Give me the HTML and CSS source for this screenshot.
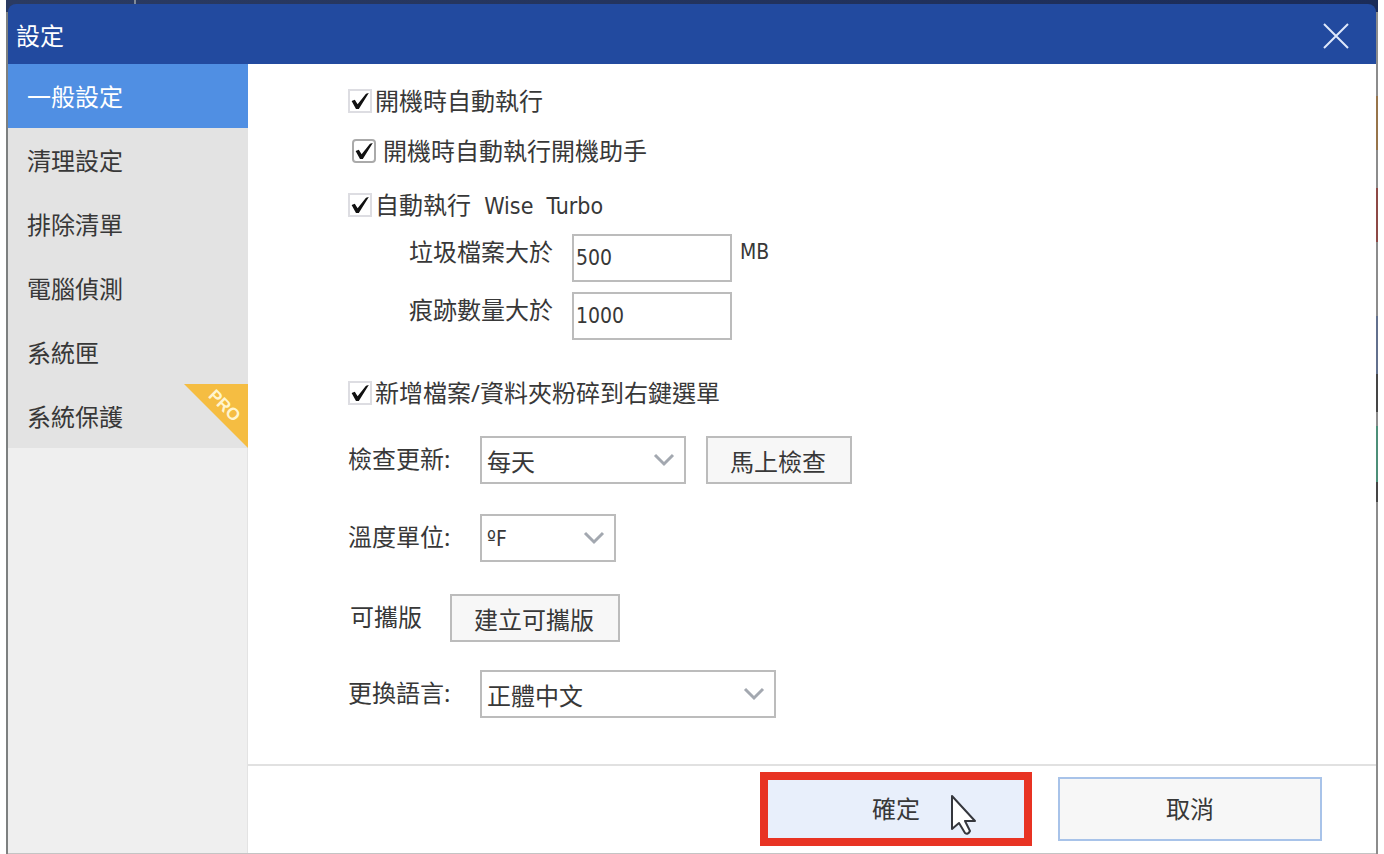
FILE: index.html
```html
<!DOCTYPE html>
<html lang="zh-Hant">
<head>
    <meta charset="UTF-8">
    <meta name="viewport" content="width=device-width, initial-scale=1.0">
    <title>設定</title>
    <link rel="stylesheet" href="styles.css">
</head>
<body>

<div class="window">
    <div class="dialog">
        <header class="titlebar">
            <h1>設定</h1>
            <button type="button" class="close-btn" aria-label="關閉">
                <svg width="28" height="28" viewBox="0 0 28 28"><path d="M2 2L26 26M26 2L2 26" fill="none" stroke="#dfe8fb" stroke-width="2"/></svg>
            </button>
        </header>

        <div class="body">
            <nav class="sidebar">
                <a href="#" class="nav-item active">一般設定</a>
                <a href="#" class="nav-item">清理設定</a>
                <a href="#" class="nav-item">排除清單</a>
                <a href="#" class="nav-item">電腦偵測</a>
                <a href="#" class="nav-item">系統匣</a>
                <a href="#" class="nav-item">系統保護<span class="pro"><span class="pro-text">PRO</span></span></a>
            </nav>

            <form class="main">
                <div class="settings">
                    <div class="check-row">
                        <input type="checkbox" id="autorun" checked>
                        <label for="autorun">開機時自動執行</label>
                    </div>
                    <div class="check-row helper">
                        <input type="checkbox" id="boothelper" checked>
                        <label for="boothelper">開機時自動執行開機助手</label>
                    </div>
                    <div class="check-row turbo">
                        <input type="checkbox" id="turbo" checked>
                        <label for="turbo">自動執行<span class="latin">  Wise  Turbo</span></label>
                    </div>

                    <div class="limits">
                        <label for="junk">垃圾檔案大於</label>
                        <input type="text" id="junk" value="500">
                        <span class="unit">MB</span>
                        <label for="traces">痕跡數量大於</label>
                        <input type="text" id="traces" value="1000">
                    </div>

                    <div class="check-row shred">
                        <input type="checkbox" id="shred" checked>
                        <label for="shred">新增檔案/資料夾粉碎到右鍵選單</label>
                    </div>

                    <div class="options">
                        <div class="field">
                            <label for="update">檢查更新:</label>
                            <div class="select medium">
                                <select id="update"><option>每天</option></select>
                                <svg width="22" height="14" viewBox="0 0 22 14"><path d="M2 2L11 11L20 2" fill="none" stroke="#a3a8b0" stroke-width="3"/></svg>
                            </div>
                            <button type="button" class="btn check-now">馬上檢查</button>
                        </div>
                        <div class="field">
                            <label for="temp">溫度單位:</label>
                            <div class="select small">
                                <select id="temp" class="latin-select"><option>ºF</option></select>
                                <svg width="22" height="14" viewBox="0 0 22 14"><path d="M2 2L11 11L20 2" fill="none" stroke="#a3a8b0" stroke-width="3"/></svg>
                            </div>
                        </div>
                        <div class="field portable">
                            <span class="field-name">可攜版</span>
                            <button type="button" class="btn create">建立可攜版</button>
                        </div>
                        <div class="field">
                            <label for="lang">更換語言:</label>
                            <div class="select large">
                                <select id="lang"><option>正體中文</option></select>
                                <svg width="22" height="14" viewBox="0 0 22 14"><path d="M2 2L11 11L20 2" fill="none" stroke="#a3a8b0" stroke-width="3"/></svg>
                            </div>
                        </div>
                    </div>
                </div>

                <footer class="footer">
                    <button type="button" class="ok-btn">確定
                        <svg class="cursor" width="28" height="42" viewBox="0 0 28 42"><path d="M2 2V35L9 29L15 39Q18 41 20 37L15 27H25Z" fill="#fff" stroke="#35373d" stroke-width="2" stroke-linejoin="round"/></svg>
                    </button>
                    <button type="button" class="cancel-btn">取消</button>
                </footer>
            </form>
        </div>
    </div>
</div>

</body>
</html>
```
FILE: styles.css
```css
* {
    box-sizing: border-box;
}

body {
    margin: 0;
    padding: 0 6px;
    background-color: #fff;
    font-family: "Noto Sans", "Noto Sans CJK TC", sans-serif;
    font-size: 24px;
    line-height: 32px;
    color: #383838;
}

button,
input,
select {
    margin: 0;
    font-family: inherit;
    font-size: 24px;
    color: inherit;
}

/* desktop showing round the dialog edges */
.window {
    min-height: 100vh;
    display: flex;
    padding: 4px 2px 0;
    background:
        linear-gradient(#7f8a99, #7f8a99) 128px 0 / 2px 4px no-repeat,
        linear-gradient(90deg, #2b3b62, #1b2c59) 0 0 / 100% 12px no-repeat,
        linear-gradient(#8c8c8c 96px, #97744a 96px 150px, #8c8c8c 150px 188px, #8d4845 188px 242px, #8c8c8c 242px 316px, #62708d 316px 374px, #454545 374px 412px, #8c8c8c 412px 426px, #4c8f78 426px 482px, #454545 482px 502px, #8c8c8c 502px) 100% 0 / 2px 100% no-repeat,
        #7d8080;
}

.dialog {
    flex: 1;
    display: flex;
    flex-direction: column;
    border-bottom: 1px solid #c4c4c4;
}

.titlebar {
    display: flex;
    justify-content: space-between;
    align-items: center;
    height: 60px;
    padding: 4px 26px 0 8px;
    background-color: #224a9f;
    border-radius: 8px 8px 0 0;
    color: #fff;
}

.titlebar h1 {
    margin: 0;
    font-size: 24px;
    font-weight: 400;
}

.close-btn {
    display: flex;
    padding: 0;
    border: none;
    background: none;
}

.body {
    flex: 1;
    display: flex;
}

.sidebar {
    width: 240px;
    background-color: #efefef;
    border-right: 1px solid #e3e3e3;
}

.nav-item {
    position: relative;
    display: block;
    height: 64px;
    margin-right: -1px;
    padding: 0 19px;
    line-height: 66px;
    background-color: #e3e3e3;
    color: #383838;
    text-decoration: none;
}

.nav-item.active {
    background-color: #508fe3;
    color: #fff;
}

.pro {
    position: absolute;
    top: 0;
    right: 0;
    width: 64px;
    height: 64px;
    background-color: #f5bd42;
    clip-path: polygon(0 0, 100% 0, 100% 100%);
}

.pro-text {
    position: absolute;
    top: 12px;
    left: 16px;
    width: 48px;
    line-height: 20px;
    font-family: "Liberation Sans", sans-serif;
    font-size: 17px;
    font-weight: 700;
    text-align: center;
    color: #fff5cf;
    transform: rotate(45deg);
}

.main {
    flex: 1;
    display: flex;
    flex-direction: column;
    background-color: #fff;
}

.settings {
    flex: 1;
    padding: 21px 24px 46px 100px;
}

.check-row {
    display: flex;
    align-items: center;
    gap: 3px;
    height: 32px;
}

.check-row input {
    appearance: none;
    width: 24px;
    height: 24px;
    border: 2px solid #dddde2;
    background-color: #fff;
}

.check-row input:checked::before {
    content: "";
    display: block;
    width: 20px;
    height: 20px;
    background-color: #111;
    clip-path: polygon(8% 50%, 24% 44%, 38% 66%, 80% 14%, 94% 10%, 44% 90%, 30% 90%);
}

.helper {
    gap: 7px;
    margin-top: 18px;
    padding-left: 4px;
}

.helper input {
    border-color: #aaa;
    border-radius: 4px;
}

.turbo {
    margin-top: 22px;
}

.latin {
    font-family: "DejaVu Sans Condensed", "DejaVu Sans", sans-serif;
    font-size: 23px;
    white-space: pre;
}

.limits {
    display: grid;
    grid-template-columns: 163px 160px auto;
    row-gap: 10px;
    margin: 13px 0 0 61px;
}

.limits label,
.unit {
    line-height: 36px;
}

.limits input,
.unit,
.select .latin-select {
    font-family: "DejaVu Sans Condensed", "DejaVu Sans", sans-serif;
    font-size: 21px;
}

.limits input {
    height: 48px;
    padding: 0 2px;
    border: 2px solid #bcbcbc;
}

.unit {
    padding-left: 8px;
}

.shred {
    margin-top: 37px;
}

.options {
    display: flex;
    flex-direction: column;
    gap: 30px;
    margin-top: 27px;
}

.field {
    display: flex;
    align-items: center;
    height: 48px;
}

.field label {
    width: 132px;
    padding-bottom: 3px;
}

.field-name {
    width: 100px;
    padding-bottom: 3px;
}

.portable {
    margin: 2px 0 -2px;
    padding-left: 2px;
}

.select {
    position: relative;
}

.select select {
    appearance: none;
    width: 100%;
    height: 48px;
    padding: 2px 5px 0;
    border: 2px solid #bcbcbc;
    border-radius: 0;
    background-color: #fff;
}

.select svg {
    position: absolute;
    top: 17px;
    right: 11px;
    pointer-events: none;
}

.medium {
    width: 206px;
}

.small {
    width: 136px;
}

.large {
    width: 296px;
}

.btn {
    height: 48px;
    padding: 0 2px 0 0;
    border: 2px solid #bcbcbc;
    background-color: #f7f7f7;
}

.check-now {
    width: 146px;
    margin-left: 20px;
}

.create {
    width: 170px;
}

.footer {
    display: flex;
    justify-content: flex-end;
    align-items: center;
    gap: 26px;
    padding: 6px 54px 7px 24px;
    border-top: 2px solid #e1e1e1;
}

.ok-btn {
    position: relative;
    width: 272px;
    height: 74px;
    padding: 0 0 3px;
    border: 8px solid #e83323;
    background-color: #e8effb;
}

.cursor {
    position: absolute;
    top: 14px;
    right: 46px;
}

.cancel-btn {
    width: 264px;
    height: 64px;
    padding: 0 0 3px;
    border: 2px solid #a8c3e9;
    background-color: #f7f7f7;
}
```
